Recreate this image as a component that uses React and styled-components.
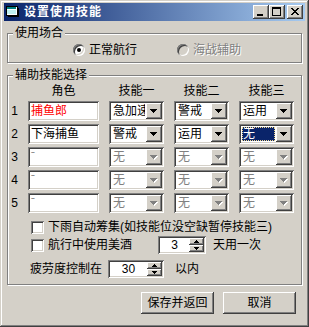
import React from "react";
import styled, { createGlobalStyle, css } from "styled-components";

const FACE = "#D4D0C8";

const GlobalStyle = createGlobalStyle`
  html, body {
    margin: 0;
    padding: 0;
    background: ${FACE};
  }
  body {
    font-family: "Liberation Sans", "Noto Sans CJK SC", sans-serif;
    font-size: 12px;
    line-height: 14px;
    color: #000;
  }
  * {
    box-sizing: border-box;
  }
`;

const raised = css`
  box-shadow: inset -1px -1px #404040, inset 1px 1px #fff,
    inset -2px -2px #808080, inset 2px 2px ${FACE};
`;

const sunken = css`
  box-shadow: inset 1px 1px #808080, inset -1px -1px #fff,
    inset 2px 2px #404040, inset -2px -2px ${FACE};
`;

const Window = styled.div`
  width: 309px;
  height: 327px;
  background: ${FACE};
  padding: 3px 4px 4px;
  display: flex;
  flex-direction: column;
  box-shadow: inset -1px -1px #404040, inset 1px 1px ${FACE},
    inset -2px -2px #808080, inset 2px 2px #fff;
`;

const TitleBar = styled.div`
  height: 18px;
  display: flex;
  align-items: center;
  padding: 0 2px 0 1px;
  background: linear-gradient(to right, #0a246a, #a6caf0);
`;

const Title = styled.span`
  color: #fff;
  font-weight: bold;
  letter-spacing: 1px;
  margin-left: 3px;
`;

const CaptionButtons = styled.div`
  margin-left: auto;
  display: flex;
`;

const CaptionButton = styled.div`
  width: 16px;
  height: 14px;
  margin-left: ${(p) => p.$gap || 0}px;
  background: ${FACE};
  ${raised};
  svg {
    display: block;
  }
`;

const GroupBox = styled.fieldset`
  margin: 5px 3px 0;
  padding: ${(p) => p.$pad};
  min-width: 0;
  border: 1px solid #808080;
  box-shadow: inset 1px 1px #fff, 1px 1px #fff;
`;

const Legend = styled.legend`
  margin-left: 5px;
  padding: 0 2px;
  background: ${FACE};
  line-height: 14px;
`;

const RadioRow = styled.div`
  display: flex;
  margin-left: 65px;
  height: 14px;
`;

const RadioItem = styled.label`
  width: 104px;
  display: flex;
  align-items: center;
  gap: 4px;
  color: ${(p) => (p.$disabled ? "#808080" : "#000")};
  text-shadow: ${(p) => (p.$disabled ? "1px 1px #fff" : "none")};
`;

const RadioCircle = styled.span`
  width: 12px;
  height: 12px;
  border-radius: 50%;
  display: flex;
  align-items: center;
  justify-content: center;
  background: ${(p) => (p.$disabled ? FACE : "#fff")};
  box-shadow: inset 1px 1px #808080, inset -1px -1px #fff,
    inset 2px 2px #404040, inset -2px -2px ${FACE};
  &::after {
    content: "";
    width: 4px;
    height: 4px;
    border-radius: 50%;
    background: ${(p) => (p.$checked ? "#000" : "transparent")};
  }
`;

const SkillGrid = styled.div`
  display: grid;
  grid-template-columns: 10px 71px 55px 55px 55px;
  grid-template-rows: 14px;
  grid-auto-rows: 20px;
  column-gap: 10px;
  row-gap: 3px;
  margin-top: 1px;
`;

const ColHeader = styled.div`
  text-align: center;
  white-space: nowrap;
`;

const RowNum = styled.div`
  align-self: center;
  text-align: right;
`;

const TextBox = styled.div`
  height: 20px;
  padding: 3px 3px;
  background: #fff;
  color: ${(p) => p.$color || "#000"};
  white-space: nowrap;
  overflow: hidden;
  ${sunken};
`;

const Combo = styled.div`
  height: 20px;
  padding: 2px;
  display: flex;
  background: #fff;
  ${sunken};
`;

const ComboValue = styled.div`
  flex: 1;
  min-width: 0;
  margin: 1px;
  padding-left: 1px;
  line-height: 14px;
  white-space: nowrap;
  overflow: hidden;
  background: ${(p) => (p.$selected ? "#0a246a" : "transparent")};
  color: ${(p) => (p.$selected ? "#fff" : p.$disabled ? "#808080" : "#000")};
  outline: ${(p) => (p.$selected ? "1px dotted #f0d890" : "none")};
  outline-offset: -1px;
`;

const DropButton = styled.div`
  width: 16px;
  height: 16px;
  flex: none;
  display: flex;
  align-items: center;
  justify-content: center;
  background: ${FACE};
  ${raised};
`;

const OptionRow = styled.div`
  height: 18px;
  display: flex;
  align-items: center;
  margin-top: ${(p) => p.$mt || 0}px;
  padding-left: ${(p) => p.$pl || 0}px;
  white-space: nowrap;
`;

const CheckBox = styled.span`
  width: 13px;
  height: 13px;
  flex: none;
  margin-right: 4px;
  background: #fff;
  ${sunken};
`;

const Spin = styled.div`
  width: ${(p) => p.$w}px;
  height: 18px;
  display: flex;
  margin-left: ${(p) => p.$ml}px;
  margin-right: ${(p) => p.$mr}px;
  padding: 2px;
  background: #fff;
  ${sunken};
`;

const SpinText = styled.div`
  flex: 1;
  text-align: center;
  line-height: 14px;
`;

const SpinButtons = styled.div`
  width: 15px;
  display: flex;
  flex-direction: column;
`;

const SpinBtn = styled.div`
  flex: 1;
  display: flex;
  align-items: center;
  justify-content: center;
  background: ${FACE};
  ${raised};
  svg {
    display: block;
  }
`;

const ButtonRow = styled.div`
  display: flex;
  justify-content: flex-end;
  gap: 9px;
  margin: 7px 9px 0 0;
`;

const PushButton = styled.button`
  width: 73px;
  height: 22px;
  padding: 0;
  border: none;
  background: ${FACE};
  font: inherit;
  color: #000;
  ${raised};
`;

const Arrow = ({ disabled }) => (
  <svg width="8" height="5" viewBox="0 0 8 5" shapeRendering="crispEdges">
    {disabled && (
      <path d="M1 1h7v1h-1v1h-1v1h-1v1h-1v-1h-1v-1h-1v-1h-1z" fill="#fff" />
    )}
    <path
      d="M0 0h7v1h-1v1h-1v1h-1v1h-1v-1h-1v-1h-1v-1h-1z"
      fill={disabled ? "#808080" : "#000"}
    />
  </svg>
);

const SmallArrow = ({ up }) => (
  <svg width="5" height="3" viewBox="0 0 5 3" shapeRendering="crispEdges">
    <path
      d={up ? "M2 0h1v1h1v1h1v1h-5v-1h1v-1h1z" : "M0 0h5v1h-1v1h-1v1h-1v-1h-1v-1h-1z"}
      fill="#000"
    />
  </svg>
);

const closeCells = [];
for (let i = 0; i < 7; i++) {
  closeCells.push(<rect key={"a" + i} x={4 + i} y={3 + i} width="2" height="1" />);
  closeCells.push(<rect key={"b" + i} x={10 - i} y={3 + i} width="2" height="1" />);
}

const AppIcon = () => (
  <svg width="16" height="16" viewBox="0 0 16 16" shapeRendering="crispEdges">
    <path d="M3 4h11v9h-11z" fill="#000" />
    <path d="M1 2h11v9h-11z" fill="#fff" stroke="#000" strokeWidth="1" />
    <path d="M2 3h9v2h-9z" fill="#008080" />
    <path d="M2 6h9v4h-9z" fill="#c0f0f0" />
  </svg>
);

const rows = [
  { name: "捕鱼郎", color: "#ff0000", skills: ["急加速", "警戒", "运用"] },
  { name: "下海捕鱼", skills: ["警戒", "运用", "无"], selected: 2 },
  { name: "ˉ", disabled: true, skills: ["无", "无", "无"] },
  { name: "ˉ", disabled: true, skills: ["无", "无", "无"] },
  { name: "ˉ", disabled: true, skills: ["无", "无", "无"] },
];

const App = () => {
  return (
    <>
      <GlobalStyle />
      <Window>
        <TitleBar>
          <AppIcon />
          <Title>设置使用技能</Title>
          <CaptionButtons>
            <CaptionButton>
              <svg width="16" height="14" shapeRendering="crispEdges">
                <rect x="4" y="9" width="6" height="2" fill="#000" />
              </svg>
            </CaptionButton>
            <CaptionButton>
              <svg width="16" height="14" shapeRendering="crispEdges">
                <path d="M3 2h9v9h-9zM4 4v6h7v-6z" fill="#000" fillRule="evenodd" />
              </svg>
            </CaptionButton>
            <CaptionButton $gap={2}>
              <svg width="16" height="14" shapeRendering="crispEdges" fill="#000">
                {closeCells}
              </svg>
            </CaptionButton>
          </CaptionButtons>
        </TitleBar>

        <GroupBox $pad="3px 0 5px">
          <Legend>使用场合</Legend>
          <RadioRow>
            <RadioItem>
              <RadioCircle $checked />
              正常航行
            </RadioItem>
            <RadioItem $disabled>
              <RadioCircle $disabled />
              海战辅助
            </RadioItem>
          </RadioRow>
        </GroupBox>

        <GroupBox $pad="1px 0 6px">
          <Legend>辅助技能选择</Legend>
          <SkillGrid>
            <div />
            <ColHeader>角色</ColHeader>
            <ColHeader>技能一</ColHeader>
            <ColHeader>技能二</ColHeader>
            <ColHeader>技能三</ColHeader>
            {rows.map((r, i) => (
              <React.Fragment key={i}>
                <RowNum>{i + 1}</RowNum>
                <TextBox $color={r.disabled ? "#808080" : r.color}>{r.name}</TextBox>
                {r.skills.map((s, j) => (
                  <Combo key={j}>
                    <ComboValue $disabled={r.disabled} $selected={r.selected === j}>
                      {s}
                    </ComboValue>
                    <DropButton>
                      <Arrow disabled={r.disabled} />
                    </DropButton>
                  </Combo>
                ))}
              </React.Fragment>
            ))}
          </SkillGrid>

          <OptionRow $mt={5} $pl={23}>
            <CheckBox />
            下雨自动筹集(如技能位没空缺暂停技能三)
          </OptionRow>
          <OptionRow $pl={23}>
            <CheckBox />
            航行中使用美酒
            <Spin $w={48} $ml={26} $mr={7}>
              <SpinText>3</SpinText>
              <SpinButtons>
                <SpinBtn>
                  <SmallArrow up />
                </SpinBtn>
                <SpinBtn>
                  <SmallArrow />
                </SpinBtn>
              </SpinButtons>
            </Spin>
            天用一次
          </OptionRow>
          <OptionRow $mt={6} $pl={22}>
            疲劳度控制在
            <Spin $w={56} $ml={6} $mr={11}>
              <SpinText>30</SpinText>
              <SpinButtons>
                <SpinBtn>
                  <SmallArrow up />
                </SpinBtn>
                <SpinBtn>
                  <SmallArrow />
                </SpinBtn>
              </SpinButtons>
            </Spin>
            以内
          </OptionRow>
        </GroupBox>

        <ButtonRow>
          <PushButton>保存并返回</PushButton>
          <PushButton>取消</PushButton>
        </ButtonRow>
      </Window>
    </>
  );
};

export default App;
